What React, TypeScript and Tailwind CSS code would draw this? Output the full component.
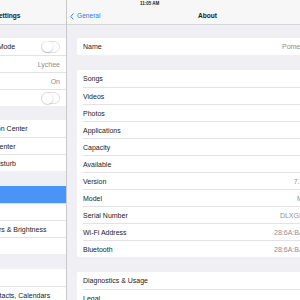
type LeftRow = { label: string; value?: string; toggle?: boolean; selected?: boolean };
type RightRow = { label: string; value?: string; chevron?: boolean };

const LEFT: LeftRow[][] = [
  [
    { label: "Airplane Mode", toggle: true },
    { label: "Wi-Fi", value: "Lychee" },
    { label: "Bluetooth", value: "On" },
    { label: "VPN", toggle: true },
  ],
  [{ label: "Notification Center" }, { label: "Control Center" }, { label: "Do Not Disturb" }],
  [
    { label: "General", selected: true },
    { label: "Sounds" },
    { label: "Wallpapers & Brightness" },
    { label: "Privacy" },
  ],
  [{ label: "iCloud" }, { label: "Mail, Contacts, Calendars" }],
];

const LEFT_GAP = ["mt-0", "mt-[14px]", "mt-[15px]", "mt-[15px]"];

const RIGHT: RightRow[][] = [
  [{ label: "Name", value: "Pomegranate", chevron: true }],
  [
    { label: "Songs", value: "0" },
    { label: "Videos", value: "0" },
    { label: "Photos", value: "0" },
    { label: "Applications", value: "12" },
    { label: "Capacity", value: "13.5 GB" },
    { label: "Available", value: "10.2 GB" },
    { label: "Version", value: "7.1 (11D167)" },
    { label: "Model", value: "MD510LL/A" },
    { label: "Serial Number", value: "DLXG5K2MDJ8T" },
    { label: "Wi-Fi Address", value: "28:6A:BA:3F:92:A1" },
    { label: "Bluetooth", value: "28:6A:BA:3F:92:A2" },
  ],
  [
    { label: "Diagnostics & Usage", chevron: true },
    { label: "Legal", chevron: true },
  ],
];

export default function App() {
  return (
    <div className="relative w-[300px] h-[300px] overflow-hidden bg-[#efeff4] font-['Liberation_Sans',Arial,sans-serif] text-[7px] text-[#222]">
      <div className="flex ml-[-51px] w-[399px] h-full">
        {/* master pane */}
        <div className="w-[118px] shrink-0 border-r border-[#c8c7cc] h-full">
          <div className="h-[25px] bg-[#f7f7f8] border-b border-[#d6d6da] flex items-end justify-center pb-[4px]">
            <span className="font-semibold text-[6.6px] leading-none">Settings</span>
          </div>
          <div className="pt-[13px]">
            {LEFT.map((group, gi) => (
              <div key={gi} className={`bg-white ${LEFT_GAP[gi]}`}>
                {group.map((r, i) => (
                  <div
                    key={r.label}
                    className={`h-[17px] flex items-center pl-[21px] pr-[6px] ${r.selected ? "bg-[#4c93f6] text-white" : ""} ${i > 0 && !r.selected ? "border-t border-[#e3e3e6]" : ""}`}
                  >
                    <span className="flex-1 whitespace-nowrap leading-none">{r.label}</span>
                    {r.value && <span className="text-[#8e8e93] leading-none">{r.value}</span>}
                    {r.toggle && <Toggle />}
                  </div>
                ))}
              </div>
            ))}
          </div>
        </div>

        {/* detail pane */}
        <div className="w-[281px] shrink-0 h-full">
          <div className="h-[25px] bg-[#f7f7f8] border-b border-[#d6d6da] relative flex items-end justify-center pb-[4px]">
            <div className="absolute left-[3px] bottom-[4px] flex items-center gap-[3px] text-[#1a7cf9]">
              <svg width="4" height="7" viewBox="0 0 4 7" fill="none">
                <path d="M3.4 0.5 L0.8 3.5 L3.4 6.5" stroke="#1a7cf9" strokeWidth="0.9" />
              </svg>
              <span className="leading-none text-[6.6px]">General</span>
            </div>
            <span className="font-semibold text-[6.6px] leading-none">About</span>
          </div>
          <div className="pt-[13px] px-[10px] space-y-[15px]">
            {RIGHT.map((group, gi) => (
              <div key={gi} className="bg-white rounded-[2px] pl-[6px]">
                {group.map((r, i) => (
                  <div
                    key={r.label}
                    className={`h-[17px] flex items-center pr-[4px] ${i > 0 ? "border-t border-[#e3e3e6]" : ""}`}
                  >
                    <span className="flex-1 whitespace-nowrap leading-none">{r.label}</span>
                    {r.value && <span className="text-[#8e8e93] leading-none whitespace-nowrap">{r.value}</span>}
                    {r.chevron && (
                      <svg width="3" height="6" viewBox="0 0 3 6" fill="none" className="ml-[7px]">
                        <path d="M0.4 0.4 L2.5 3 L0.4 5.6" stroke="#c7c7cc" strokeWidth="0.8" />
                      </svg>
                    )}
                  </div>
                ))}
              </div>
            ))}
          </div>
        </div>
      </div>

      {/* status bar clock */}
      <div className="absolute top-[2px] left-[140px] text-[4.5px] font-semibold leading-none">11:05 AM</div>
    </div>
  );
}

function Toggle() {
  return (
    <div className="w-[19px] h-[12px] rounded-full border border-[#e1e1e4] bg-white flex items-center">
      <div className="w-[11px] h-[11px] rounded-full bg-white shadow-[0_0.5px_1.5px_rgba(0,0,0,0.3)]" />
    </div>
  );
}
